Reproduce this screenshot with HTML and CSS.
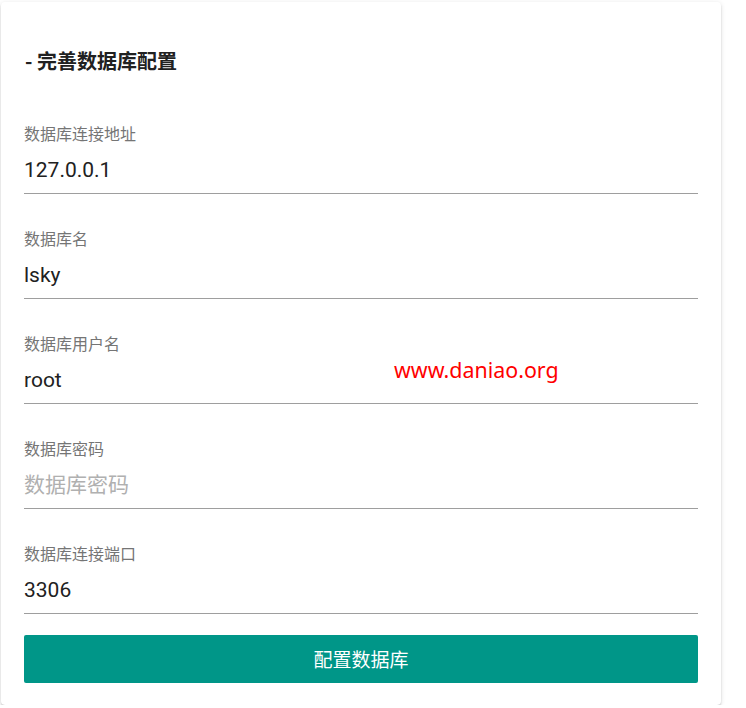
FILE: index.html
```html
<!DOCTYPE html>
<html lang="zh-CN">
<head>
<meta charset="utf-8">
<title>完善数据库配置</title>
<link rel="stylesheet" href="styles.css">
</head>
<body>
<div class="card">
  <h2 class="title">- 完善数据库配置</h2>
  <div class="field">
    <label class="label">数据库连接地址</label>
    <div class="input">127.0.0.1</div>
  </div>
  <div class="field">
    <label class="label">数据库名</label>
    <div class="input">lsky</div>
  </div>
  <div class="field">
    <label class="label">数据库用户名</label>
    <div class="input">root</div>
  </div>
  <div class="field">
    <label class="label">数据库密码</label>
    <div class="input placeholder">数据库密码</div>
  </div>
  <div class="field">
    <label class="label">数据库连接端口</label>
    <div class="input">3306</div>
  </div>
  <button class="btn">配置数据库</button>
  <div class="watermark">www.daniao.org</div>
</div>
</body>
</html>
```
FILE: styles.css
```css
html, body {
  margin: 0;
  padding: 0;
  background: #fff;
}
body {
  font-family: Roboto, "Noto Sans CJK SC", sans-serif;
  padding: 2px 0 0 1px;
}
.card {
  position: relative;
  width: 720px;
  box-sizing: border-box;
  padding: 47px 23px 22px 23px;
  background: #fff;
  border-radius: 4px;
  box-shadow: 0 2px 2px rgba(0,0,0,.14), 0 1px 5px rgba(0,0,0,.12), 0 3px 1px -2px rgba(0,0,0,.2);
}
.title {
  margin: 0 0 50px 1px;
  font-family: "Noto Sans CJK SC", sans-serif;
  font-size: 20px;
  line-height: 24px;
  font-weight: 700;
  color: #212121;
}
.field {
  margin-top: 34px;
}
.label {
  display: block;
  margin-bottom: 2px;
  font-family: "Noto Sans CJK SC", sans-serif;
  font-size: 16px;
  line-height: 20px;
  color: #757575;
}
.input {
  height: 48px;
  line-height: 50px;
  font-size: 21px;
  color: #212121;
  border-bottom: 1px solid #9e9e9e;
}
.placeholder {
  color: #b0b0b0;
  line-height: 46px;
  font-family: "Noto Sans CJK SC", sans-serif;
}
.btn {
  display: block;
  width: 100%;
  height: 48px;
  margin-top: 21px;
  border: none;
  border-radius: 2px;
  background: #009688;
  color: #fff;
  font-family: "Noto Sans CJK SC", sans-serif;
  font-size: 19px;
  line-height: 46px;
  padding: 0;
}
.watermark {
  position: absolute;
  left: 393px;
  top: 356px;
  font-family: "Noto Sans", sans-serif;
  font-size: 21.4px;
  line-height: 24px;
  color: #ff0000;
}
```
